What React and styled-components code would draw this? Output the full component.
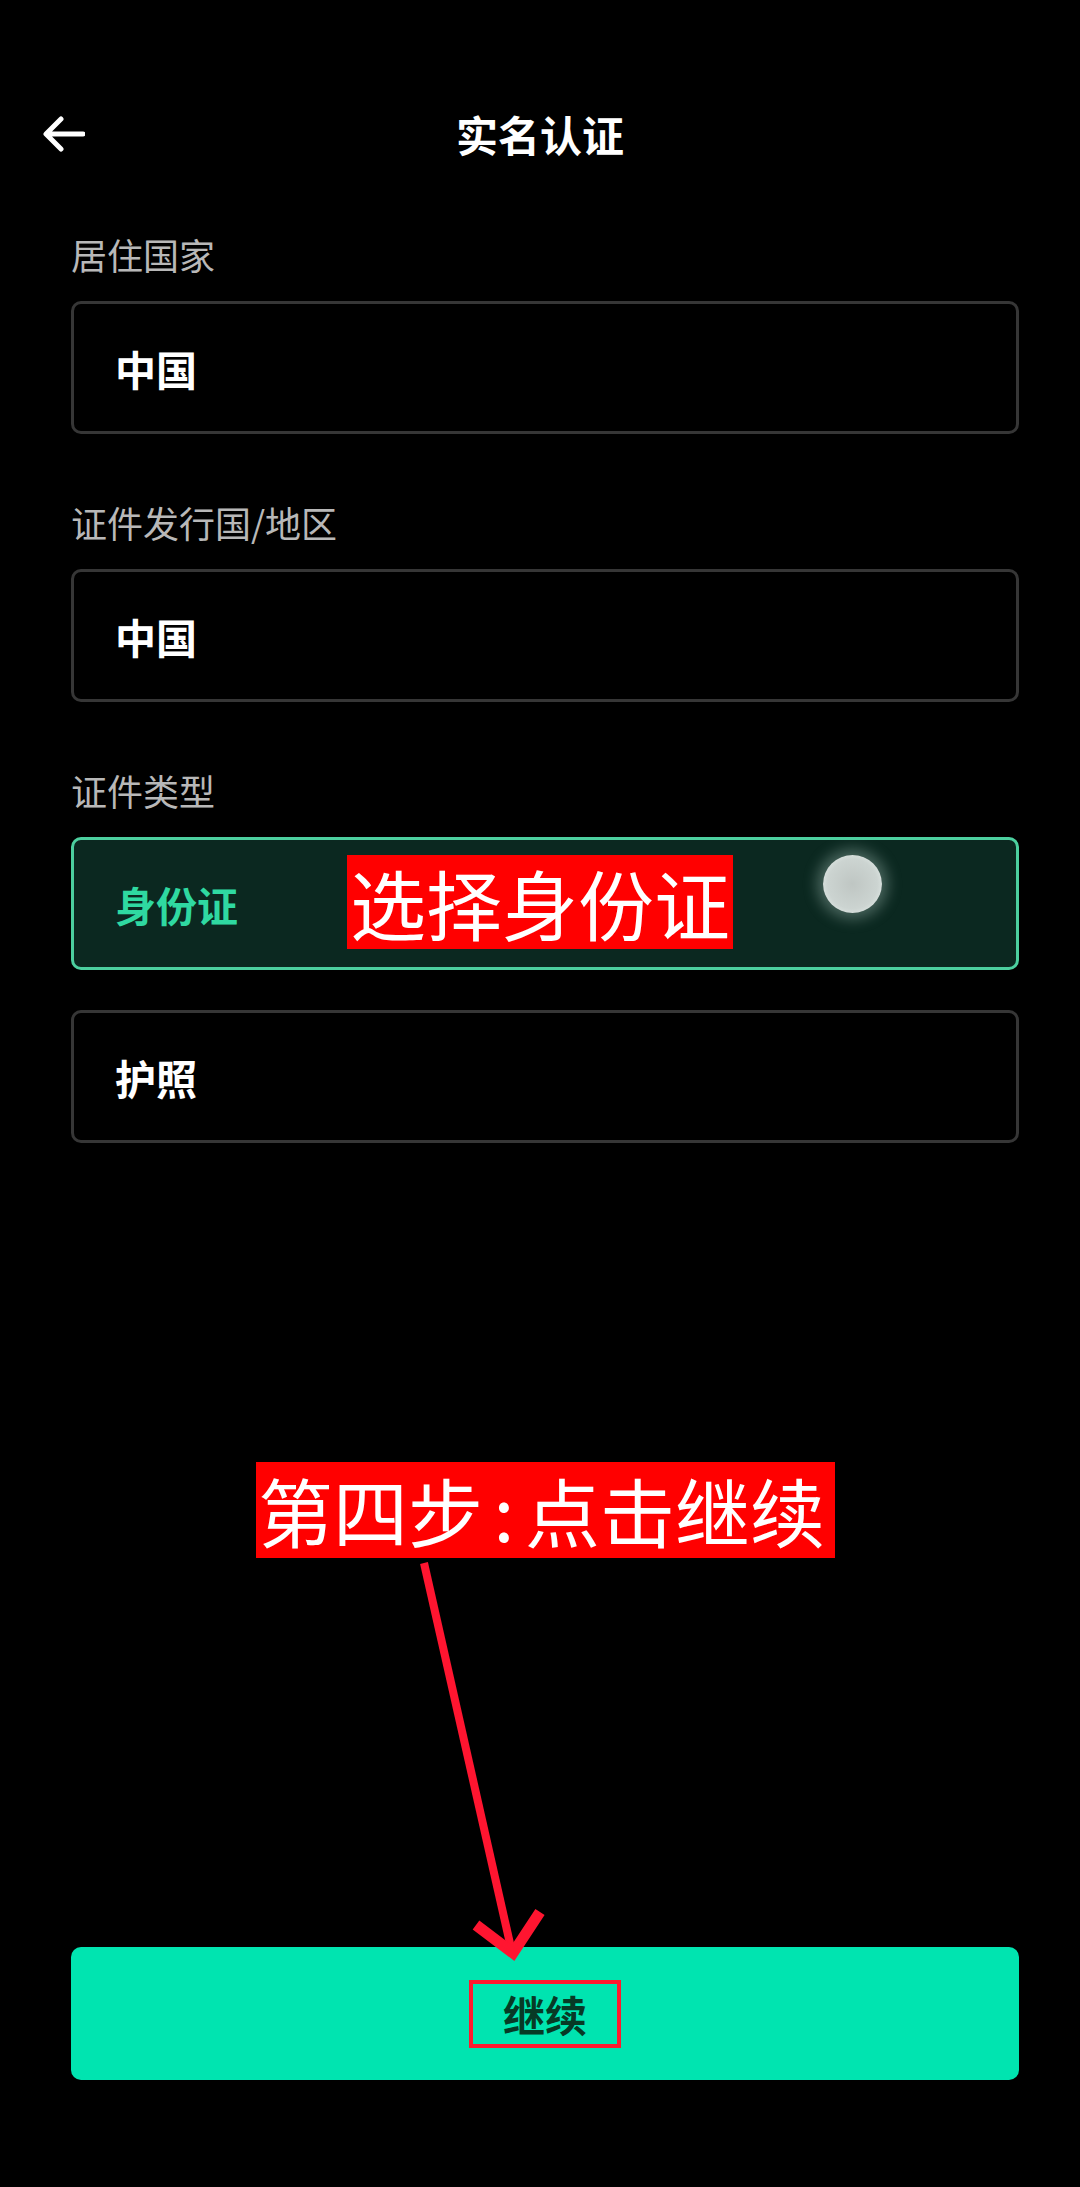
import React from 'react'
import styled, { createGlobalStyle } from 'styled-components'

const GlobalStyle = createGlobalStyle`
    html, body {
        margin: 0;
        padding: 0;
        background: #000;
    }
    * {
        box-sizing: border-box;
    }
`

const Page = styled.div`
    position: relative;
    min-height: 100vh;
    display: flex;
    flex-direction: column;
    padding-bottom: 107px;
    background: #000;
    color: #fff;
    font-family: "Noto Sans CJK SC", "Noto Sans", sans-serif;
`

const Header = styled.header`
    margin-top: 84px;
    height: 100px;
    padding: 0 43px;
    display: grid;
    grid-template-columns: 1fr auto 1fr;
    align-items: center;
`

const BackButton = styled.button`
    justify-self: start;
    width: 44px;
    height: 44px;
    padding: 0;
    border: none;
    background: none;
    display: flex;
    align-items: center;
    cursor: pointer;
`

const Title = styled.h1`
    margin: 0;
    font-size: 42px;
    font-weight: 700;
    line-height: 1;
    color: #fff;
`

const Form = styled.div`
    margin: 50px 61px 0 71px;
    display: flex;
    flex-direction: column;
`

const Section = styled.section`
    display: flex;
    flex-direction: column;
    & + & {
        margin-top: 68px;
    }
`

const Label = styled.div`
    font-size: 36px;
    line-height: 40px;
    color: #b8b8b8;
    margin-bottom: 27px;
`

const Field = styled.div`
    position: relative;
    height: 133px;
    display: flex;
    align-items: center;
    padding-left: 41px;
    border: 3px solid ${p => (p.$active ? '#4ccf9f' : '#363636')};
    border-radius: 10px;
    background: ${p => (p.$active ? '#0b2820' : '#000')};
    color: ${p => (p.$active ? '#2fd9a1' : '#fff')};
    font-size: 41px;
    font-weight: 600;
    & + & {
        margin-top: 40px;
    }
`

const Tag = styled.span`
    position: absolute;
    left: 273px;
    top: 15px;
    padding: 0 3px;
    background: #ff0000;
    color: #fff;
    font-size: 76px;
    font-weight: 400;
    line-height: 94px;
    white-space: nowrap;
`

const Touch = styled.span`
    position: absolute;
    left: 749px;
    top: 15px;
    width: 59px;
    height: 58px;
    border-radius: 50%;
    background: radial-gradient(circle at 50% 50%, #bfc6c3 0%, #ccd4d1 60%, #eaf2ef 92%);
    box-shadow: 0 0 14px 6px rgba(190, 215, 205, 0.35);
`

const Step = styled.div`
    position: absolute;
    left: 256px;
    top: 1462px;
    width: 579px;
    padding-left: 2px;
    background: #ff0000;
    color: #fff;
    font-size: 75px;
    line-height: 96px;
    white-space: nowrap;
`

const Colon = styled.span`
    display: inline-block;
    width: 42px;
    text-align: center;
`

const Pointer = styled.svg`
    position: absolute;
    left: 0;
    top: 0;
    width: 1080px;
    height: 2187px;
    pointer-events: none;
`

const Submit = styled.button`
    margin: auto 61px 0 71px;
    height: 133px;
    border: none;
    border-radius: 10px;
    background: #00e4b0;
    display: flex;
    align-items: center;
    justify-content: center;
    font-family: inherit;
    cursor: pointer;
`

const SubmitText = styled.span`
    padding: 0 30px;
    border: 4px solid #ff1a2e;
    font-size: 42px;
    font-weight: 700;
    line-height: 60px;
    color: #073a26;
`

const fields = [
    { label: '居住国家', options: ['中国'] },
    { label: '证件发行国/地区', options: ['中国'] },
    { label: '证件类型', options: ['身份证', '护照'], active: 0 },
]

const App = () => {
    return (
        <Page>
            <GlobalStyle />
            <Header>
                <BackButton aria-label="返回">
                    <svg width="42" height="36" viewBox="0 0 42 36">
                        <path d="M40 18H4M18 3L3 18l15 15" fill="none" stroke="#fff" strokeWidth="5" strokeLinecap="round" strokeLinejoin="round" />
                    </svg>
                </BackButton>
                <Title>实名认证</Title>
                <div />
            </Header>

            <Form>
                {fields.map(f => (
                    <Section key={f.label}>
                        <Label>{f.label}</Label>
                        {f.options.map((o, i) => (
                            <Field key={o} $active={f.active === i}>
                                {o}
                                {f.active === i && (
                                    <>
                                        <Tag>选择身份证</Tag>
                                        <Touch />
                                    </>
                                )}
                            </Field>
                        ))}
                    </Section>
                ))}
            </Form>

            <Submit>
                <SubmitText>继续</SubmitText>
            </Submit>

            <Step>第四步<Colon>:</Colon>点击继续</Step>
            <Pointer viewBox="0 0 1080 2187">
                <line x1="424" y1="1563" x2="511" y2="1948" stroke="#ff1530" strokeWidth="8" />
                <polyline points="476,1925 513,1953 540,1912" fill="none" stroke="#ff1530" strokeWidth="11" />
            </Pointer>
        </Page>
    )
}

export default App
